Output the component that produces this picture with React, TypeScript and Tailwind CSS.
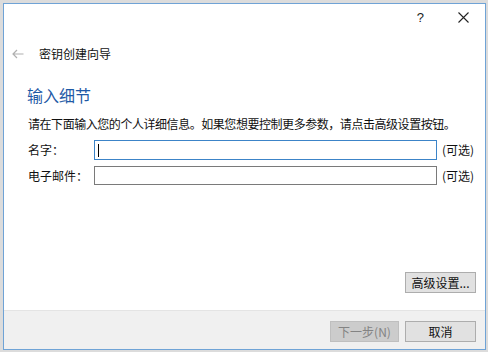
import React from "react";

const font = { fontFamily: '"Noto Sans CJK SC", "Microsoft YaHei", "Liberation Sans", sans-serif' };

export default function App() {
  return (
    <div className="w-[488px] h-[352px] bg-[#dcdcdc] pt-[3px] pl-[3px] overflow-hidden" style={font}>
      <div className="w-[483px] h-[347px] border border-[#6fa3d6] bg-white flex flex-col text-[12px] text-[#111]">
        {/* title bar */}
        <div className="h-[26px] flex items-center justify-end pr-[16px]">
          <span className="text-[13px] leading-none text-[#222] mr-[34px]" style={{ fontFamily: '"Liberation Sans", sans-serif' }}>?</span>
          <svg width="11" height="11" viewBox="0 0 11 11">
            <path d="M0.5 0.5 L10.5 10.5 M10.5 0.5 L0.5 10.5" stroke="#222" strokeWidth="1.1" />
          </svg>
        </div>
        {/* back row */}
        <div className="mt-[14px] h-[20px] flex items-center pl-[8px]">
          <svg width="12" height="10" viewBox="0 0 12 10">
            <path d="M11.5 5 H1 M5 1 L1 5 L5 9" stroke="#b0b0b0" strokeWidth="1.2" fill="none" />
          </svg>
          <span className="ml-[15px] text-[12px] leading-none">密钥创建向导</span>
        </div>
        {/* heading */}
        <div className="mt-[20px] h-[22px] flex items-center pl-[23px] text-[16px] text-[#1f5aa6] leading-none">
          输入细节
        </div>
        {/* description */}
        <div className="mt-[10px] h-[16px] flex items-center pl-[24px] leading-none whitespace-nowrap tracking-[-0.45px]">
          请在下面输入您的个人详细信息。如果您想要控制更多参数，请点击高级设置按钮。
        </div>
        {/* name row */}
        <div className="mt-[8px] h-[20px] flex items-center pl-[24px]">
          <span className="w-[66px] leading-none">名字：</span>
          <div className="w-[343px] h-[20px] border border-[#3c84c8] flex items-center pl-[3px]">
            <div className="w-[1px] h-[13px] bg-black" />
          </div>
          <span className="ml-[5px] leading-none">(可选)</span>
        </div>
        {/* email row */}
        <div className="mt-[6px] h-[19px] flex items-center pl-[24px]">
          <span className="w-[66px] leading-none">电子邮件：</span>
          <div className="w-[343px] h-[19px] border border-[#7a7a7a]" />
          <span className="ml-[5px] leading-none">(可选)</span>
        </div>
        <div className="flex-1" />
        <div className="flex justify-end pr-[9px] mb-[17px]">
          <div className="w-[71px] h-[21px] bg-[#e1e1e1] border border-[#adadad] flex items-center justify-center leading-none">
            高级设置...
          </div>
        </div>
        {/* footer */}
        <div className="h-[39px] bg-[#f0f0f0] border-t border-[#e4e4e4] flex justify-end items-start pt-[10px] pr-[9px] gap-[6px]">
          <div className="w-[69px] h-[21px] bg-[#cccccc] border border-[#bfbfbf] flex items-center justify-center leading-none text-[#838383]">
            下一步(N)
          </div>
          <div className="w-[71px] h-[21px] bg-[#e1e1e1] border border-[#adadad] flex items-center justify-center leading-none">
            取消
          </div>
        </div>
      </div>
    </div>
  );
}
